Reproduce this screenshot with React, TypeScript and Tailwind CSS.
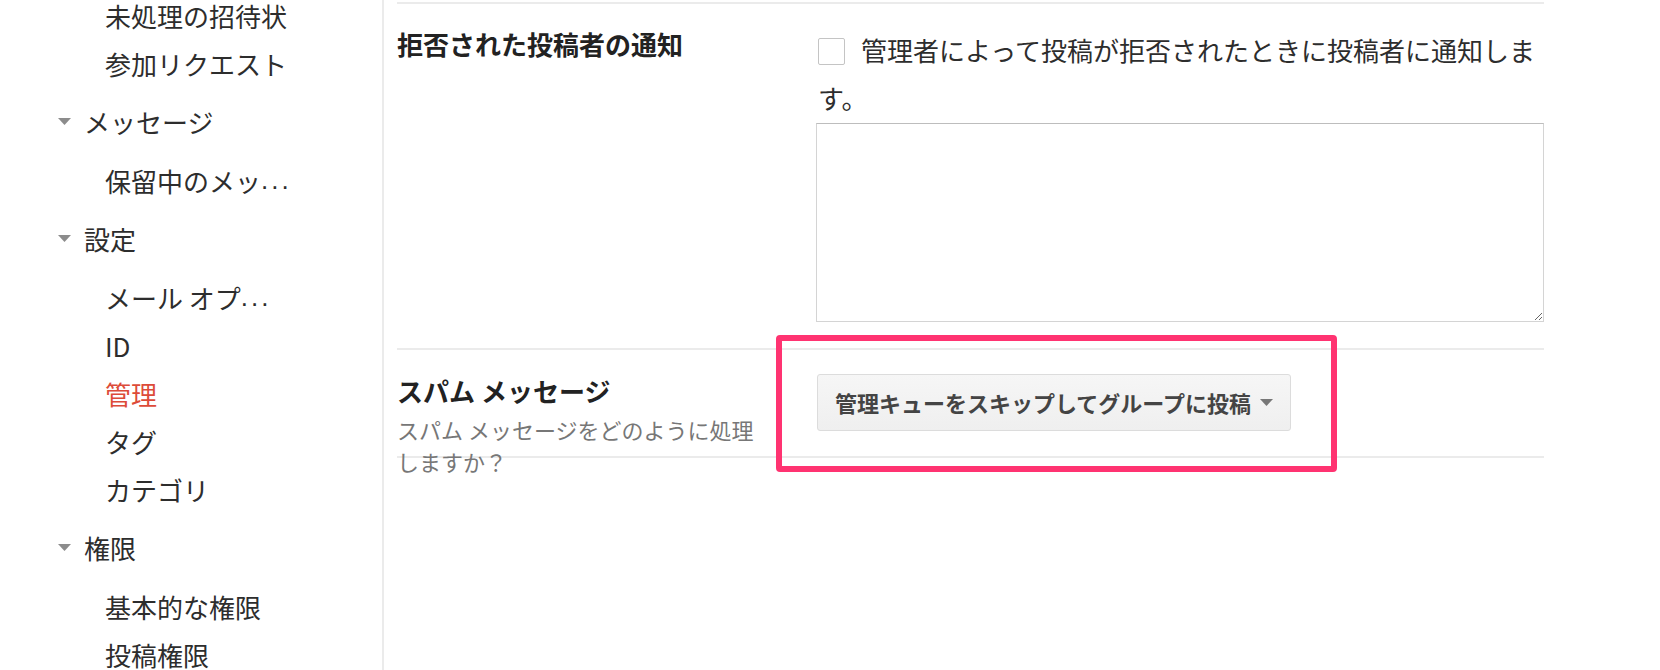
import React from "react";

function Dots() {
  return (
    <span className="font-['Liberation_Sans',sans-serif] tracking-[3px]">...</span>
  );
}

function Child({ children, red }: { children: React.ReactNode; red?: boolean }) {
  return (
    <div
      className={
        "h-[48px] flex items-center pl-[105px] whitespace-nowrap " +
        (red ? "text-[#dd4b39]" : "text-[#2d2d2d]")
      }
    >
      {children}
    </div>
  );
}

function Group({ children }: { children: React.ReactNode }) {
  return (
    <div className="h-[48px] mt-[10px] mb-[11px] flex items-center pl-[58px] gap-[13px] text-[#2d2d2d]">
      <svg width="13" height="7" viewBox="0 0 13 7" className="shrink-0">
        <polygon points="0,0 13,0 6.5,7" fill="#8c8c8c" />
      </svg>
      <span>{children}</span>
    </div>
  );
}

export default function App() {
  return (
    <div className="flex w-[1660px] h-[670px] overflow-hidden bg-white font-['Noto_Sans_CJK_JP',sans-serif] text-[#333]">
      <aside className="w-[384px] shrink-0 border-r-2 border-[#ebebeb] text-[26px]">
        <div className="mt-[-9px]">
          <Child>未処理の招待状</Child>
          <Child>参加リクエスト</Child>
          <Group>メッセージ</Group>
          <Child>
            保留中のメッ
            <Dots />
          </Child>
          <Group>設定</Group>
          <Child>
            メール オプ
            <Dots />
          </Child>
          <Child>ID</Child>
          <Child red>管理</Child>
          <Child>タグ</Child>
          <Child>カテゴリ</Child>
          <Group>権限</Group>
          <Child>基本的な権限</Child>
          <Child>投稿権限</Child>
        </div>
      </aside>

      <main className="pl-[13px] pt-[2px]">
        <div className="w-[1147px] border-t-2 border-[#ebebeb]">
          {/* Row 1 */}
          <div className="h-[346px] flex pt-[23px] border-b-2 border-[#ebebeb]">
            <div className="w-[419px] shrink-0">
              <h2 className="mt-[-2px] text-[26px] font-bold leading-[38px] text-[#222]">
                拒否された投稿者の通知
              </h2>
            </div>
            <div className="w-[728px] shrink-0">
              <p className="mt-[-1px] mb-[1px] text-[26px] leading-[48px] pl-[2px] text-[#2d2d2d]">
                <span className="inline-block w-[27px] h-[27px] border border-[#c4c4c4] rounded-[2px] bg-white align-middle mr-[16px] relative top-[-2px]"></span>
                管理者によって投稿が拒否されたときに投稿者に通知します。
              </p>
              <textarea className="block w-[728px] h-[199px] mt-[1px] border border-[#d4d4d4] border-t-[#bdbdbd] bg-white outline-none" />
            </div>
          </div>

          {/* Row 2 */}
          <div className="relative h-[108px] flex pt-[22px] border-b-2 border-[#ebebeb]">
            <div className="w-[419px] shrink-0">
              <h2 className="text-[26px] font-bold leading-[38px] text-[#222]">
                スパム メッセージ
              </h2>
              <p className="w-[370px] mt-[3px] text-[22px] leading-[32px] text-[#777]">
                スパム メッセージをどのように処理しますか？
              </p>
            </div>
            <div className="w-[728px] shrink-0">
              <button className="mt-[2px] ml-[1px] w-[474px] h-[57px] flex items-center pl-[17px] pr-[17px] border border-[#dcdcdc] rounded-[3px] bg-linear-to-b from-[#f6f6f6] to-[#efefef] text-[22px] font-bold text-[#444] whitespace-nowrap">
                <span>管理キューをスキップしてグループに投稿</span>
                <svg width="13" height="7" viewBox="0 0 13 7" className="shrink-0 ml-auto">
                  <polygon points="0,0 13,0 6.5,7" fill="#777" />
                </svg>
              </button>
            </div>
            <div className="absolute left-[379px] top-[-15px] w-[561px] h-[137px] border-[6px] border-[#ff3371] rounded-[4px] pointer-events-none"></div>
          </div>
        </div>
      </main>
    </div>
  );
}
